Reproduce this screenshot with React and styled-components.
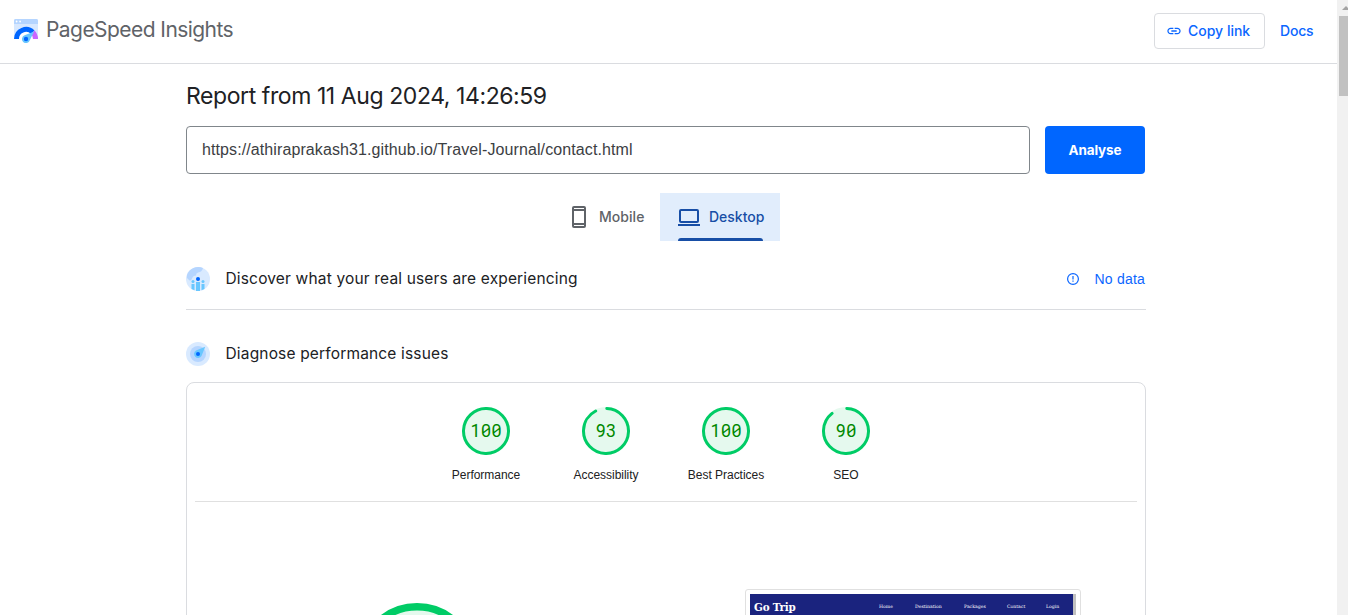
import React from 'react';
import styled, { createGlobalStyle } from 'styled-components';

const Global = createGlobalStyle`
  *, *::before, *::after { box-sizing: border-box; }
  html, body { margin: 0; padding: 0; overflow: hidden; background: #fff; }
  body { font-family: "Liberation Sans", Arial, sans-serif; color: #202124; }
`;

const Page = styled.div`
  display: flex;
  width: 1348px;
  height: 615px;
  overflow: hidden;
`;
const Content = styled.div`
  width: 1337px;
  flex: none;
  height: 615px;
  overflow: hidden;
`;
const display = `font-family: Inter, "Liberation Sans", sans-serif; white-space: nowrap;`;

const Header = styled.header`
  display: flex;
  align-items: flex-start;
  height: 64px;
  padding: 13px 23px 0 14px;
  border-bottom: 1px solid #dadce0;
`;
const Logo = styled.svg`
  width: 24px;
  height: 24px;
  margin-top: 6px;
  flex: none;
`;
const Brand = styled.div`
  ${display}
  margin-left: 8px;
  font-size: 21px;
  line-height: 34px;
  letter-spacing: -0.56px;
  color: #5f6368;
  flex: 1;
`;
const CopyButton = styled.button`
  ${display}
  display: flex;
  align-items: center;
  width: 111px;
  height: 36px;
  padding: 0 0 1px 11px;
  border: 1px solid #dadce0;
  border-radius: 4px;
  background: #fff;
  color: #0b66ff;
  font-size: 14px;
  font-weight: 500;
  letter-spacing: 0;
  svg { margin: 1px 6px 0 0; flex: none; }
`;
const DocsLink = styled.a`
  ${display}
  width: 34px;
  margin-left: 15px;
  line-height: 36px;
  font-size: 14px;
  font-weight: 500;
  letter-spacing: -0.2px;
  color: #0b66ff;
`;

const Main = styled.main`
  width: 960px;
  margin-left: 186px;
`;
const Title = styled.h1`
  ${display}
  margin: 0;
  padding-top: 16px;
  height: 62px;
  font-size: 23px;
  font-weight: 400;
  line-height: 32px;
  letter-spacing: -0.42px;
`;
const SearchRow = styled.div`
  display: flex;
  gap: 15px;
  height: 48px;
`;
const UrlField = styled.div`
  width: 844px;
  padding-left: 15px;
  border: 1px solid #80868b;
  border-radius: 4px;
  font-size: 16px;
  line-height: 45px;
  letter-spacing: 0.1px;
  color: #3c4043;
`;
const AnalyseButton = styled.button`
  ${display}
  width: 100px;
  border: 0;
  border-radius: 4px;
  padding: 0;
  background: #06f;
  color: #fff;
  font-size: 13.5px;
  font-weight: 700;
  letter-spacing: -0.15px;
`;
const Tabs = styled.div`
  display: flex;
  height: 48px;
  margin: 19px 0 0 368px;
`;
const Tab = styled.div`
  ${display}
  display: flex;
  flex-direction: column;
  width: ${p => (p.$active ? 120 : 106)}px;
  padding-left: ${p => (p.$active ? 17 : 13)}px;
  background: ${p => (p.$active ? '#e1edfc' : '#fff')};
  color: ${p => (p.$active ? '#174ea6' : '#5f6368')};
`;
const TabLabel = styled.div`
  display: flex;
  align-items: center;
  gap: 8px;
  height: 45px;
  padding-top: 2px;
  font-size: 14px;
  font-weight: 500;
  letter-spacing: ${p => p.$spacing};
  svg { flex: none; margin-top: 1px; }
`;
const TabIndicator = styled.div`
  width: 85px;
  height: 3px;
  margin-left: 1px;
  border-radius: 3px 3px 0 0;
  background: #174ea6;
`;
const Section = styled.section`
  display: flex;
  align-items: center;
  height: ${p => p.$height}px;
  padding-top: ${p => p.$top || 0}px;
  border-bottom: ${p => (p.$line ? '1px solid #dadce0' : '0')};
`;
const SectionTitle = styled.h2`
  ${display}
  flex: 1;
  margin: 0 0 0 15.500px;
  font-size: 15.5px;
  font-weight: 400;
  line-height: 24px;
  letter-spacing: 0.165px;
`;
const NoData = styled.div`
  display: flex;
  align-items: center;
  gap: 15px;
  padding-right: 1px;
  font-size: 14px;
  letter-spacing: 0.2px;
  color: #0b66ff;
`;
const Report = styled.div`
  height: 260px;
  margin-top: 16px;
  padding: 0 8px;
  border: 1px solid #dadce0;
  border-radius: 8px;
`;
const Scores = styled.div`
  display: flex;
  justify-content: center;
  height: 119px;
  padding-top: 24px;
  border-bottom: 1px solid #e0e0e0;
`;
const Score = styled.div`
  display: flex;
  flex-direction: column;
  align-items: center;
  width: 120px;
`;
const Dial = styled.div`
  display: grid;
  width: 48px;
  height: 48px;
  > * { grid-area: 1 / 1; }
`;
const DialValue = styled.span`
  place-self: center;
  padding-bottom: 2px;
  font-family: "Roboto Mono", "DejaVu Sans Mono", monospace;
  font-size: 17.5px;
  color: #080;
`;
const ScoreLabel = styled.div`
  margin-top: 13px;
  font-size: 12px;
  line-height: 14px;
  letter-spacing: -0.03px;
  white-space: nowrap;
  color: #212121;
`;
const Detail = styled.div`
  display: flex;
  align-items: flex-start;
  padding-left: 162px;
`;
const BigDial = styled.svg`
  width: 120px;
  height: 120px;
  margin-top: 100.500px;
  flex: none;
`;
const Preview = styled.div`
  width: 336px;
  height: 160px;
  margin: 87px 0 0 268px;
  padding: 4px 0 0 4px;
  border: 1px solid #e0e0e0;
  border-radius: 3px;
`;
const PreviewBar = styled.div`
  display: flex;
  align-items: flex-start;
  width: 326px;
  height: 60px;
  padding-left: 4px;
  border-right: 3px solid #c1c1c1;
  background: #1a237e;
  color: #fff;
  font-family: "DejaVu Serif", "Liberation Serif", serif;
  white-space: nowrap;
`;
const PreviewBrand = styled.div`
  width: 125px;
  padding-top: 4px;
  font-family: "DejaVu Serif Condensed", "DejaVu Serif", serif;
  font-size: 11.5px;
  font-stretch: condensed;
  font-weight: 700;
  line-height: 18px;
  letter-spacing: -0.2px;
`;
const PreviewLink = styled.span`
  width: ${p => p.$width}px;
  padding-top: 8px;
  font-size: 4.6px;
  line-height: 10px;
`;
const Scrollbar = styled.div`
  width: 11px;
  height: 615px;
  padding-left: 2px;
  background: #f1f1f1;
  svg { display: block; }
`;
const Thumb = styled.div`
  height: 80px;
  background: #c1c1c1;
`;

const scores = [
  { value: 100, label: 'Performance' },
  { value: 93, label: 'Accessibility' },
  { value: 100, label: 'Best Practices' },
  { value: 90, label: 'SEO' },
];

function DialRing({ value }) {
  const full = value === 100;
  return (
    <svg width="48" height="48" viewBox="0 0 48 48">
      <circle cx="24" cy="24" r="24" fill="#e5f9ee" />
      <circle
        cx="24" cy="24" r="22.5" fill="none" stroke="#0c6" strokeWidth="3"
        strokeLinecap="round" pathLength="100"
        strokeDasharray={full ? undefined : `${value - 1.2} 100`}
        transform="rotate(-88 24 24)"
      />
    </svg>
  );
}

export default function App() {
  return (
    <>
      <Global />
      <Page>
        <Content>
          <Header>
            <Logo viewBox="0 0 24 24">
              <path fill="#d7e8ff" d="M0 1.5Q0 0 1.5 0h21Q24 0 24 1.5V20H0z" />
              <path fill="#b5d5ff" d="M0 1.5Q0 0 1.5 0h21Q24 0 24 1.5V5H0z" />
              <circle cx="2.6" cy="2.5" r=".9" fill="#fff" />
              <circle cx="6.1" cy="2.5" r=".9" fill="#fff" />
              <path fill="#fff" d="M4 20a8 8 0 0 1 16 0v4H4z" />
              <path fill="#0066ff" d="M0 20a12 12 0 0 1 20.5-8.5L17 15A7 7 0 0 0 5 20z" />
              <path fill="#c967ff" d="M20.5 11.5A12 12 0 0 1 24 20h-5a7 7 0 0 0-2-5z" />
              <path fill="#69c7ff" d="M20.200 12.400 15.800 21.200A4 4 0 1 1 10.600 16.300z" />
              <circle cx="12" cy="20" r="2.200" fill="#06f" />
            </Logo>
            <Brand>PageSpeed Insights</Brand>
            <CopyButton>
              <svg width="16" height="16" viewBox="0 0 24 24" fill="#0b66ff">
                <path d="M3.9 12c0-1.71 1.39-3.1 3.1-3.1h4V7H7c-2.76 0-5 2.24-5 5s2.24 5 5 5h4v-1.9H7c-1.71 0-3.1-1.39-3.1-3.1zM8 13h8v-2H8v2zm9-6h-4v1.9h4c1.71 0 3.1 1.39 3.1 3.1s-1.39 3.1-3.1 3.1h-4V17h4c2.76 0 5-2.24 5-5s-2.24-5-5-5z" />
              </svg>
              Copy link
            </CopyButton>
            <DocsLink>Docs</DocsLink>
          </Header>
          <Main>
            <Title>Report from 11 Aug 2024, 14:26:59</Title>
            <SearchRow>
              <UrlField>https://athiraprakash31.github.io/Travel-Journal/contact.html</UrlField>
              <AnalyseButton>Analyse</AnalyseButton>
            </SearchRow>
            <Tabs>
              <Tab>
                <TabLabel $spacing="0.05px">
                  <svg width="24" height="24" viewBox="0 0 24 24" fill="#5f6368">
                    <path fillRule="evenodd" d="M7 1h10a2 2 0 0 1 2 2v18a2 2 0 0 1-2 2H7a2 2 0 0 1-2-2V3a2 2 0 0 1 2-2zm0 2v1h10V3zm0 3v12h10V6zm0 14v1h10v-1z" />
                  </svg>
                  Mobile
                </TabLabel>
              </Tab>
              <Tab $active>
                <TabLabel $spacing="0">
                  <svg width="24" height="24" viewBox="0 0 24 24" fill="#174ea6">
                    <path fillRule="evenodd" d="M4 4h16a2 2 0 0 1 2 2v10a2 2 0 0 1-2 2H4a2 2 0 0 1-2-2V6a2 2 0 0 1 2-2zm0 2v10h16V6zM1 19h22v2H1z" />
                  </svg>
                  Desktop
                </TabLabel>
                <TabIndicator />
              </Tab>
            </Tabs>
            <Section $height={69} $top={7} $line>
              <svg width="24" height="24" viewBox="0 0 24 24">
                <circle cx="12" cy="12" r="12" fill="#d9eaff" />
                <path fill="#b5d5ff" d="M1 8A12 12 0 0 1 17 1q-1 4-5 4.500-2 .5-2 3-3 0-4 3t-3 1.500L1 11z" />
                <g fill="#69c7ff">
                  <path d="M10 15h4v9h-4zM5.500 17h3v6.300L5.500 22zM15.500 17h3v5l-3 1.300z" />
                  <circle cx="7" cy="14.500" r="1.500" /><circle cx="17" cy="14.500" r="1.500" />
                </g>
                <circle cx="12" cy="12" r="2" fill="#06f" />
              </svg>
              <SectionTitle>Discover what your real users are experiencing</SectionTitle>
              <NoData>
                <svg width="14" height="14" viewBox="0 0 14 14" fill="none" stroke="#0b66ff" strokeWidth="1.200">
                  <circle cx="7" cy="7" r="5.400" />
                  <path d="M7 4v3.600M7 8.600v1.200" />
                </svg>
                No data
              </NoData>
            </Section>
            <Section $height={56} $top={32}>
              <svg width="24" height="24" viewBox="0 0 24 24">
                <circle cx="12" cy="12" r="12" fill="#d9eaff" />
                <circle cx="12" cy="12" r="8" fill="#b5d5ff" />
                <path fill="#69c7ff" d="M19.200 4.800 15.500 14a4 4 0 1 1-5.500-5.500z" />
                <circle cx="12" cy="12" r="2" fill="#06f" />
              </svg>
              <SectionTitle>Diagnose performance issues</SectionTitle>
            </Section>
            <Report>
              <Scores>
                {scores.map(s => (
                  <Score key={s.label}>
                    <Dial>
                      <DialRing value={s.value} />
                      <DialValue>{s.value}</DialValue>
                    </Dial>
                    <ScoreLabel>{s.label}</ScoreLabel>
                  </Score>
                ))}
              </Scores>
              <Detail>
                <BigDial viewBox="0 0 120 120">
                  <circle cx="60" cy="60" r="56.200" fill="#e5f9ee" stroke="#0c6" strokeWidth="7.500" />
                </BigDial>
                <Preview>
                  <PreviewBar>
                    <PreviewBrand>Go Trip</PreviewBrand>
                    <PreviewLink $width={36}>Home</PreviewLink>
                    <PreviewLink $width={49}>Destination</PreviewLink>
                    <PreviewLink $width={43}>Packages</PreviewLink>
                    <PreviewLink $width={39}>Contact</PreviewLink>
                    <PreviewLink $width={20}>Login</PreviewLink>
                  </PreviewBar>
                </Preview>
              </Detail>
            </Report>
          </Main>
        </Content>
        <Scrollbar>
          <svg width="9" height="16" viewBox="0 0 9 16"><path fill="#a3a3a3" d="M3 10l4-4 4 4z" /></svg>
          <Thumb />
        </Scrollbar>
      </Page>
    </>
  );
}
